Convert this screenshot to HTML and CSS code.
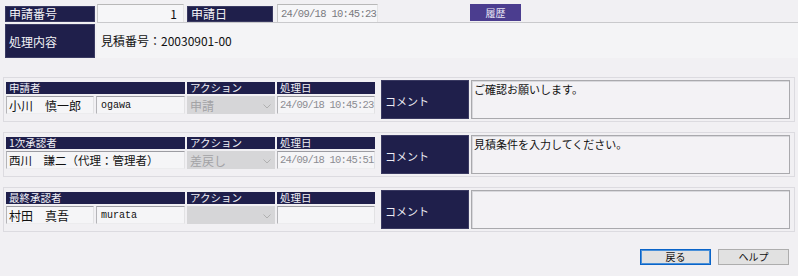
FILE: index.html
```html
<!DOCTYPE html>
<html lang="ja">
<head>
<meta charset="utf-8">
<title>申請</title>
<link rel="stylesheet" href="styles.css">
</head>
<body>
<div class="page">
  <div class="row1">
    <div class="lbl lbl-top w90">申請番号</div>
    <div class="val num">1</div>
    <div class="lbl lbl-top w86 ml3">申請日</div>
    <div class="val date">24/09/18 10:45:23</div>
    <button class="history">履歴</button>
  </div>
  <div class="row2">
    <div class="lbl lbl-tall">処理内容</div>
    <div class="content">見積番号：20030901-00</div>
  </div>

  <section class="block">
    <div class="grid">
      <div class="hd colA">申請者</div>
      <div class="hd colB">アクション</div>
      <div class="hd colC">処理日</div>
      <div class="cell name">小川　慎一郎</div>
      <div class="cell uid">ogawa</div>
      <div class="sel"><span>申請</span><svg width="8" height="5" viewBox="0 0 8 5"><path d="M0.5 0.5 L4 4 L7.5 0.5" fill="none" stroke="#b0b0b0" stroke-width="1"/></svg></div>
      <div class="cell dt">24/09/18 10:45:23</div>
    </div>
    <div class="clbl">コメント</div>
    <div class="comment">ご確認お願いします。</div>
  </section>

  <section class="block">
    <div class="grid">
      <div class="hd colA">1次承認者</div>
      <div class="hd colB">アクション</div>
      <div class="hd colC">処理日</div>
      <div class="cell name wide">西川　謙二（代理：管理者）</div>
      <div class="sel"><span>差戻し</span><svg width="8" height="5" viewBox="0 0 8 5"><path d="M0.5 0.5 L4 4 L7.5 0.5" fill="none" stroke="#b0b0b0" stroke-width="1"/></svg></div>
      <div class="cell dt">24/09/18 10:45:51</div>
    </div>
    <div class="clbl">コメント</div>
    <div class="comment">見積条件を入力してください。</div>
  </section>

  <section class="block">
    <div class="grid">
      <div class="hd colA">最終承認者</div>
      <div class="hd colB">アクション</div>
      <div class="hd colC">処理日</div>
      <div class="cell name">村田　真吾</div>
      <div class="cell uid">murata</div>
      <div class="sel"><span></span><svg width="8" height="5" viewBox="0 0 8 5"><path d="M0.5 0.5 L4 4 L7.5 0.5" fill="none" stroke="#b0b0b0" stroke-width="1"/></svg></div>
      <div class="cell dt"></div>
    </div>
    <div class="clbl">コメント</div>
    <div class="comment"></div>
  </section>

  <div class="buttons">
    <button class="btn focus">戻る</button>
    <button class="btn">ヘルプ</button>
  </div>
</div>
</body>
</html>
```
FILE: styles.css
```css
* { box-sizing: border-box; }
html, body { margin: 0; padding: 0; }
body {
  background: #f1f0f3;
  font-family: "Noto Sans CJK JP", "Noto Sans", sans-serif;
  font-size: 12px;
  color: #111;
  width: 798px;
  height: 276px;
  overflow: hidden;
}

.lbl {
  background: #1f1f4b;
  color: #f2f2f6;
  font-size: 12px;
  display: flex;
  align-items: center;
  padding-left: 3px;
  border: 1px solid #3a3a62;
}
.w90 { width: 90px; }
.w86 { width: 86px; }
.ml3 { margin-left: 3px; }

.row1 {
  display: flex;
  align-items: flex-end;
  padding: 4px 0 0 5px;
  height: 22px;
}
.lbl-top { height: 16px; line-height: 14px; }
.val {
  background: #f6f6f8;
  border-top: 1px solid #b8b8b8;
  border-left: 1px solid #c8c8c8;
  border-right: 1px solid #e4e4e4;
  height: 18px;
  display: flex;
  align-items: center;
  white-space: nowrap;
}
.num {
  width: 87px;
  margin-left: 2px;
  justify-content: flex-end;
  padding-right: 6px;
  font-size: 12px;
}
.date {
  width: 101px;
  margin-left: 4px;
  padding-left: 3px;
  font-family: "Liberation Mono", "DejaVu Sans Mono", monospace;
  font-size: 10.5px;
  letter-spacing: -0.7px;
  color: #7a7a80;
}
.history {
  align-self: flex-start;
  margin-left: 92px;
  width: 51px;
  height: 17px;
  background: #4b3d8f;
  color: #e8e6f4;
  border: none;
  padding: 0;
  font-family: "Noto Sans CJK JP", sans-serif;
  font-size: 10px;
}

.row2 {
  display: flex;
  padding-left: 5px;
  height: 36px;
}
.lbl-tall {
  width: 90px;
  height: 34px;
  margin-top: 2px;
}
.content {
  flex: 1;
  margin-left: 2px;
  border-top: 1px solid #c9c9cc;
  background: #f4f4f6;
  padding-left: 4px;
  display: flex;
  align-items: center;
  font-size: 12px;
}

.block {
  margin: 10px 3px 0 3px;
  height: 45px;
  border: 1px solid #dcdbe0;
  padding: 2px 0 2px 2px;
  display: flex;
  align-items: flex-start;
}
.row2 + .block { margin-top: 19px; }

.grid {
  display: grid;
  grid-template-columns: 88px 89px 88px 98px;
  grid-template-rows: 12px 18px;
  column-gap: 2px;
  row-gap: 2px;
  margin-top: 2px;
  width: 369px;
}
.hd {
  background: #1f1f4b;
  color: #f0f0f6;
  font-size: 10.5px;
  line-height: 12px;
  height: 12px;
  padding-left: 3px;
  white-space: nowrap;
}
.colA { grid-column: 1 / 3; }
.colB { grid-column: 3; }
.colC { grid-column: 4; }

.cell {
  background: #f5f5f7;
  border-top: 1px solid #9c9ca2;
  border-left: 1px solid #b4b4b8;
  border-right: 1px solid #e2e2e4;
  border-bottom: 1px solid #ececee;
  height: 18px;
  display: flex;
  align-items: center;
  padding-left: 2px;
  white-space: nowrap;
}
.name { font-size: 12px; }
.name.wide { grid-column: 1 / 3; font-size: 11.5px; }
.uid {
  font-family: "Liberation Mono", "DejaVu Sans Mono", monospace;
  font-size: 10px;
  padding-left: 4px;
}
.sel {
  background: #d6d6d8;
  height: 18px;
  display: flex;
  align-items: center;
  justify-content: space-between;
  padding: 0 4px 0 3px;
  color: #a3a3a6;
  font-size: 12px;
}
.sel svg { margin-top: 3px; }
.dt {
  font-family: "Liberation Mono", "DejaVu Sans Mono", monospace;
  font-size: 10.5px;
  letter-spacing: -0.8px;
  color: #8c8c92;
  padding-left: 2px;
}

.clbl {
  margin-left: 6px;
  width: 88px;
  height: 39px;
  background: #1f1f4b;
  color: #ececf4;
  font-size: 11px;
  display: flex;
  align-items: center;
  padding-left: 3px;
  padding-top: 3px;
  border: 1px solid #3a3a62;
}
.comment {
  margin-left: 2px;
  width: 319px;
  height: 39px;
  background: #f3f2f5;
  border: 1px solid #a9a9ad;
  box-shadow: inset 1px 1px 0 #d8d8dc;
  font-size: 11px;
  line-height: 14px;
  padding: 1px 2px;
}

.buttons {
  display: flex;
  justify-content: flex-end;
  gap: 7px;
  padding-right: 9px;
  margin-top: 17px;
}
.btn {
  width: 71px;
  height: 16px;
  background: #e1e1e1;
  border: 1px solid #adadad;
  padding: 0;
  font-family: "Noto Sans CJK JP", sans-serif;
  font-size: 10px;
  line-height: 14px;
  color: #111;
}
.btn.focus {
  border: 1px solid #0a64c8;
  box-shadow: inset 0 0 0 1px #4a90d8;
}
```
